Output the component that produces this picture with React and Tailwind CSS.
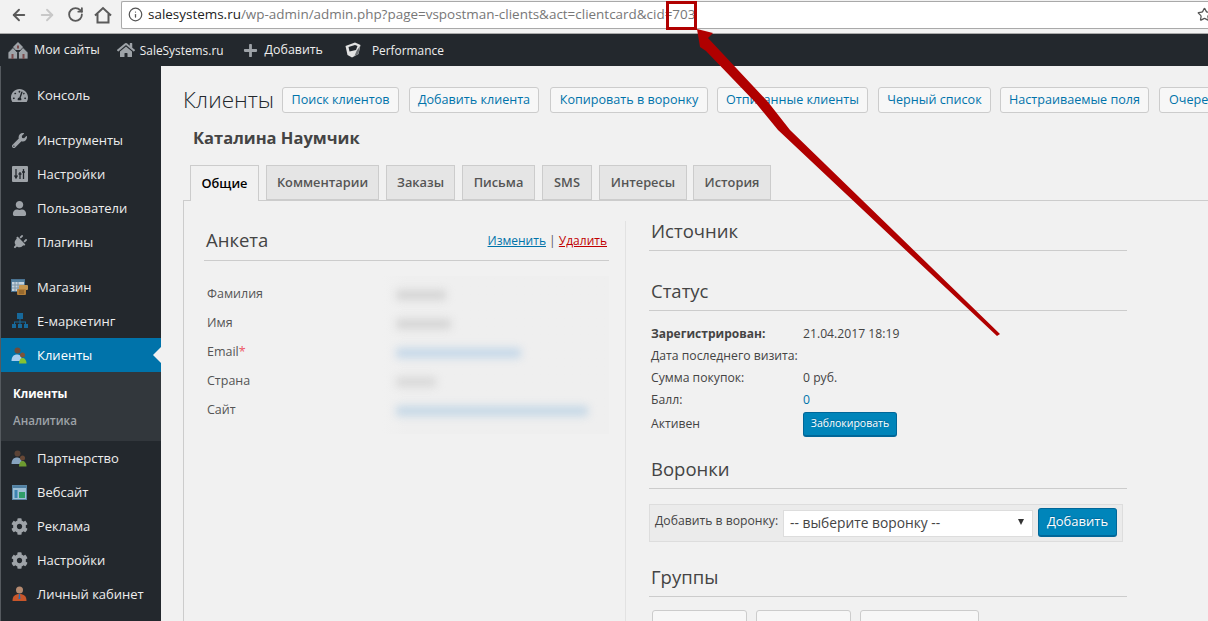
import { FaWrench, FaUser, FaPlug, FaCog, FaTachometerAlt, FaPlus, FaHome } from 'react-icons/fa';
import { ArrowLeft, ArrowRight, RotateCw, Info, Star } from 'lucide-react';

const grey = '#9ea3a8';

function SliderIcon() {
  return (
    <svg width="16" height="16" viewBox="0 0 16 16">
      <rect width="16" height="16" rx="1" fill={grey} />
      <path d="M4 3v8M2.500 9.500 4 12l1.500-2.500M8 13V6M11.500 3v10M10 6h3M6.500 8h3" stroke="#23282d" strokeWidth="1.300" fill="none" />
    </svg>
  );
}

function ShopIcon() {
  return (
    <svg width="17" height="16" viewBox="0 0 17 16">
      <rect x="0.500" y="0.500" width="13" height="12" fill="#c5d3de" stroke="#4a7392" />
      <rect x="1" y="1" width="12" height="2" fill="#55809f" />
      <path d="M4 3v9M7 3v9M1 6h12M1 9h12" stroke="#7d94a6" />
      <rect x="8" y="6" width="9" height="5" rx="1" fill="#c4954f" />
      <rect x="6" y="10" width="9" height="6" rx="1" fill="#b37f3a" />
      <path d="M8 12h5M8 14h5" stroke="#7d5520" />
    </svg>
  );
}

function TreeIcon() {
  return (
    <svg width="16" height="16" viewBox="0 0 16 16" fill="#17699b">
      <rect x="5" y="0" width="6" height="6" />
      <rect x="0" y="11" width="4" height="4" />
      <rect x="6" y="11" width="4" height="4" />
      <rect x="12" y="11" width="4" height="4" />
      <path d="M7.500 6h1v2.500H14V11h-1V9.500H8.500V11h-1V9.500H3V11H2V8.500h5.500z" />
    </svg>
  );
}

function PeopleIcon({ dim }) {
  return (
    <svg width="17" height="17" viewBox="0 0 17 17" opacity={dim ? 0.75 : 1}>
      <circle cx="6.500" cy="3.500" r="3" fill="#6e4c3a" />
      <path d="M0.500 14c0-4.500 2.500-6.500 5.500-6.500s5 2 5 6.500z" fill="#a9cdf0" />
      <circle cx="11.500" cy="8" r="2.500" fill="#7d5238" />
      <path d="M8 16.500c0-3.500 1.500-5.500 3.500-5.500s4 2 4 5.500z" fill="#86c232" />
    </svg>
  );
}

function SiteIcon() {
  return (
    <svg width="15" height="15" viewBox="0 0 15 15">
      <rect x="0.500" y="0.500" width="14" height="14" fill="#9fc0d6" stroke="#5b87a6" />
      <rect x="1" y="1" width="13" height="2" fill="#4f80a3" />
      <rect x="2.500" y="5" width="3" height="8" fill="#3d83b0" />
      <rect x="7" y="7" width="6" height="6" fill="#2f9e69" />
    </svg>
  );
}

function CabinetIcon() {
  return (
    <svg width="15" height="16" viewBox="0 0 15 16">
      <circle cx="7.500" cy="4" r="3.500" fill="#b58a70" />
      <path d="M0.500 15c0-5 2.500-7 7-7s7 2 7 7z" fill="#c9562a" />
      <path d="M7 8h1l.5 5h-2z" fill="#2f6fb0" />
    </svg>
  );
}

function NetworkIcon() {
  return (
    <svg width="20" height="17" viewBox="0 0 20 17">
      <path d="M10 0 15 5v3H5V5z" fill={grey} />
      <path d="M5 5.500 0 10.500V17h9.500v-6.500z" fill={grey} stroke="#23282d" strokeWidth="0.800" />
      <path d="M15 5.500 10.500 10.500V17H20v-6.500z" fill={grey} stroke="#23282d" strokeWidth="0.800" />
      <rect x="3.500" y="12" width="2" height="5" fill="#7a4b4b" />
      <rect x="14.500" y="12" width="2" height="5" fill="#7a4b4b" />
      <rect x="9" y="3.500" width="2" height="3" fill="#7a4b4b" />
    </svg>
  );
}

function BoxIcon() {
  return (
    <svg width="16" height="16" viewBox="0 0 16 16">
      <path d="M0.500 4 10 0.500l5.500 2.500-2 9L7 15.500 2.500 13z" fill="#e2e2e2" />
      <path d="M3.500 5 10 3l2.500 1-1.500 4-6.500 1.500z" fill="#23282d" />
      <path d="M11.500 9 15 4l-1.500 8L9.500 14z" fill="#6d7175" />
    </svg>
  );
}

function BrowserHome() {
  return (
    <svg width="18" height="18" viewBox="0 0 18 18" fill="none" stroke="#5a5a5a" strokeWidth="2">
      <path d="M1 9.500 9 2l8 7.500M3.500 8v8.500h11V8" />
    </svg>
  );
}

function MenuItem({ icon, label, active, className = '' }) {
  return (
    <div
      className={`relative flex h-[34px] items-center text-[13px] font-normal ${
        active ? 'bg-[#0073aa] text-white' : 'text-[#eeeeee]'
      } ${className}`}
    >
      <span className="flex w-[36px] shrink-0 items-center justify-center pl-[1px]">{icon}</span>
      <span className="pt-[1px]">{label}</span>
      {active && (
        <span className="absolute right-0 top-[9px] h-0 w-0 border-y-[8px] border-r-[8px] border-y-transparent border-r-[#f1f1f1]" />
      )}
    </div>
  );
}

function Sidebar() {
  const g = { color: grey };
  return (
    <aside className="h-full w-[161px] shrink-0 border-l border-l-[#555a5f] bg-[#23282d] pt-[12px]">
      <MenuItem icon={<FaTachometerAlt size={17} style={g} />} label="Консоль" />
      <div className="h-[11px]" />
      <MenuItem icon={<FaWrench size={15} style={g} />} label="Инструменты" />
      <MenuItem icon={<SliderIcon />} label="Настройки" />
      <MenuItem icon={<FaUser size={15} style={g} />} label="Пользователи" />
      <MenuItem icon={<FaPlug size={15} className="rotate-45" style={g} />} label="Плагины" />
      <div className="h-[11px]" />
      <MenuItem icon={<ShopIcon />} label="Магазин" />
      <MenuItem icon={<TreeIcon />} label="E-маркетинг" />
      <MenuItem icon={<PeopleIcon />} label="Клиенты" active />
      <div className="h-[69px] bg-[#32373c] pl-[12px] pt-[8px] text-[11.600px] leading-[27px]">
        <div className="font-bold text-white">Клиенты</div>
        <div className="font-semibold text-[#9ea3a8]">Аналитика</div>
      </div>
      <MenuItem icon={<PeopleIcon dim />} label="Партнерство" />
      <MenuItem icon={<SiteIcon />} label="Вебсайт" />
      <MenuItem icon={<FaCog size={17} style={g} />} label="Реклама" />
      <MenuItem icon={<FaCog size={17} style={g} />} label="Настройки" />
      <MenuItem icon={<CabinetIcon />} label="Личный кабинет" />
    </aside>
  );
}

function Toolbar() {
  return (
    <div className="flex h-[34px] items-center border-b border-b-[#a9a9a9] bg-[#f2f2f2] pb-[4px] pl-[10px]">
      <ArrowLeft size={18} strokeWidth={2.5} className="text-[#5a5a5a]" />
      <ArrowRight size={18} strokeWidth={2.5} className="ml-[10px] text-[#c8c8c8]" />
      <RotateCw size={17} strokeWidth={2.6} className="ml-[11px] text-[#5a5a5a]" />
      <span className="ml-[10px]"><BrowserHome /></span>
      <div className="ml-[9px] flex h-[28px] flex-1 items-center rounded-l-[2px] border border-r-0 border-[#a9a9a9] bg-white pl-[6px] text-[13.460px]">
        <Info size={15} strokeWidth={2} className="text-[#555555]" />
        <span className="ml-[5px] whitespace-nowrap text-[#222222]">salesystems.ru</span>
        <span className="whitespace-nowrap text-[#777777]">/wp-admin/admin.php?page=vspostman-clients&amp;act=clientcard&amp;cid=703</span>
        <Star size={15} className="ml-auto mr-[-4px] shrink-0 text-[#555555]" />
      </div>
    </div>
  );
}

function AdminBar() {
  return (
    <div className="flex h-[32px] items-center bg-[#23282d] pl-[8px] text-[12.400px] text-[#eeeeee]">
      <NetworkIcon />
      <span className="ml-[6px] pt-[1px]">Мои сайты</span>
      <FaHome size={18} className="ml-[17px]" style={{ color: grey }} />
      <span className="ml-[5px] pt-[1px] text-[11.900px]">SaleSystems.ru</span>
      <FaPlus size={15} className="ml-[19px]" style={{ color: grey }} />
      <span className="ml-[7px] pt-[1px]">Добавить</span>
      <span className="ml-[22px]"><BoxIcon /></span>
      <span className="ml-[11px] pt-[1px] text-[11.900px]">Performance</span>
    </div>
  );
}

function TopButton({ children, className = '' }) {
  return (
    <button className={`h-[26px] shrink-0 whitespace-nowrap rounded-[3px] border border-[#cccccc] bg-[#f7f7f7] pt-[1px] text-[12.600px] leading-none text-[#0073aa] ${className}`}>
      {children}
    </button>
  );
}

function Tab({ label, active, width }) {
  return (
    <div
      className={`flex h-[35px] items-center justify-center border border-[#cccccc] text-[12.800px] font-semibold ${
        active ? 'mb-[-1px] h-[36px] border-b-0 bg-[#f1f1f1] text-black' : 'bg-[#e5e5e5] text-[#555555]'
      } ${width}`}
    >
      {label}
    </div>
  );
}

function SectionTitle({ children, className = '' }) {
  return (
    <div className={`h-[30px] border-b border-b-[#cccccc] pl-[2px] text-[18.500px] leading-[20px] text-[#444444] ${className}`}>
      {children}
    </div>
  );
}

function ProfileRow({ label, star, blurClass }) {
  return (
    <div className="flex h-[29px] items-center text-[12.500px] text-[#555555]">
      <span className="w-[192px] shrink-0 pl-[3px]">
        {label}
        {star && <span className="text-[#ee5566]">*</span>}
      </span>
      <span className={`h-[10px] rounded-[3px] blur-[4px] ${blurClass}`} />
    </div>
  );
}

function StatusRow({ label, value, bold, link }) {
  return (
    <div className="flex h-[22px] items-center text-[12.200px] text-[#444444]">
      <span className={`w-[154px] shrink-0 whitespace-nowrap pl-[2px] ${bold ? 'text-[12px] font-bold' : ''}`}>{label}</span>
      <span className={link ? 'text-[#0073aa]' : ''}>{value}</span>
    </div>
  );
}

function BlueButton({ children, className = '' }) {
  return (
    <button className={`rounded-[3px] border border-[#006799] border-b-[2px] bg-[#0085ba] text-white [text-shadow:0_-1px_1px_#006799] ${className}`}>
      {children}
    </button>
  );
}

function Main() {
  return (
    <main className="min-w-0 flex-1 overflow-hidden bg-[#f1f1f1] pl-[22px] pt-[21px]">
      <div className="flex h-[26px] items-center">
        <h1 className="w-[99px] shrink-0 text-[22.500px] leading-none text-[#23282d] [font-weight:300]">Клиенты</h1>
        <TopButton className="w-[117px]">Поиск клиентов</TopButton>
        <TopButton className="ml-[10px] w-[130px]">Добавить клиента</TopButton>
        <TopButton className="ml-[11px] w-[158px]">Копировать в воронку</TopButton>
        <TopButton className="ml-[9px] w-[151px]">Отписанные клиенты</TopButton>
        <TopButton className="ml-[10px] w-[113px]">Черный список</TopButton>
        <TopButton className="ml-[9px] w-[149px]">Настраиваемые поля</TopButton>
        <TopButton className="ml-[10px] w-[100px] pl-[9px] text-left">Очередь</TopButton>
      </div>
      <div className="mt-[13px] pl-[10px] text-[16.500px] font-bold leading-[24px] text-[#444444]">Каталина Наумчик</div>
      <div className="mt-[15px] flex gap-[7px] pl-[7px]">
        <Tab label="Общие" active width="w-[69px]" />
        <Tab label="Комментарии" width="w-[113px]" />
        <Tab label="Заказы" width="w-[69px]" />
        <Tab label="Письма" width="w-[73px]" />
        <Tab label="SMS" width="w-[50px]" />
        <Tab label="Интересы" width="w-[88px]" />
        <Tab label="История" width="ml-[-1px] w-[78px]" />
      </div>
      <div className="flex border-l border-t border-[#cccccc] pl-[20px] pt-[20px]">
        <section className="w-[405px] shrink-0 pt-[7px]">
          <div className="flex h-[33px] items-start justify-between border-b border-b-[#cccccc] pl-[2px] pr-[2px]">
            <span className="text-[18.500px] leading-[24px] text-[#444444]">Анкета</span>
            <span className="pt-[4px] text-[12px] text-[#555555]">
              <span className="text-[#0073aa] underline">Изменить</span> | <span className="text-[#c00000] underline">Удалить</span>
            </span>
          </div>
          <div className="mt-[15px] h-[158px] bg-gradient-to-r from-[#f1f1f1] from-[44%] to-[#efefef] to-[50%] pt-[4px]">
            <ProfileRow label="Фамилия" blurClass="w-[50px] bg-[#d4d4d4]" />
            <ProfileRow label="Имя" blurClass="w-[55px] bg-[#d4d4d4]" />
            <ProfileRow label="Email" star blurClass="w-[125px] bg-[#c4d7e8]" />
            <ProfileRow label="Страна" blurClass="w-[40px] bg-[#d8d8d8]" />
            <ProfileRow label="Сайт" blurClass="w-[192px] bg-[#c4d7e6]" />
          </div>
        </section>
        <div className="ml-[16px] h-[400px] w-px shrink-0 bg-[#e2e2e2]" />
        <section className="ml-[23px] w-[478px] shrink-0">
          <SectionTitle>Источник</SectionTitle>
          <SectionTitle className="mt-[30px]">Статус</SectionTitle>
          <div className="pt-[12px]">
            <StatusRow label="Зарегистрирован:" value="21.04.2017 18:19" bold />
            <StatusRow label="Дата последнего визита:" value="" />
            <StatusRow label="Сумма покупок:" value="0 руб." />
            <StatusRow label="Балл:" value="0" link />
            <div className="mt-[1px] flex h-[25px] items-center text-[12.200px] text-[#444444]">
              <span className="w-[154px] shrink-0 pl-[2px]">Активен</span>
              <BlueButton className="h-[25px] w-[94px] text-[10.500px]">Заблокировать</BlueButton>
            </div>
          </div>
          <SectionTitle className="mt-[22px]">Воронки</SectionTitle>
          <div className="mt-[15px] flex h-[38px] w-[474px] items-center border border-[#dddddd] bg-[#ebebeb] pl-[5px] text-[12.200px] text-[#444444]">
            <span className="w-[128px] shrink-0 whitespace-nowrap pb-[3px]">Добавить в воронку:</span>
            <div className="relative flex h-[27px] w-[250px] items-center border border-[#dddddd] bg-white pl-[6px] text-[13.800px]">
              -- выберите воронку --
              <span className="absolute right-[8px] top-[8px] h-0 w-0 border-x-[3.500px] border-t-[6px] border-x-transparent border-t-[#333333]" />
            </div>
            <BlueButton className="mb-[1px] ml-[5px] h-[29px] w-[79px] text-[13px]">Добавить</BlueButton>
          </div>
          <SectionTitle className="mt-[25px]">Группы</SectionTitle>
          <div className="mt-[13px] flex gap-[9px] pl-[3px]">
            <div className="h-[30px] w-[95px] rounded-t-[3px] border border-[#cccccc] bg-[#f7f7f7]" />
            <div className="h-[30px] w-[95px] rounded-t-[3px] border border-[#cccccc] bg-[#f7f7f7]" />
            <div className="h-[30px] w-[119px] rounded-t-[3px] border border-[#cccccc] bg-[#f7f7f7]" />
          </div>
        </section>
      </div>
    </main>
  );
}

export default function App() {
  return (
    <div className="relative h-[621px] w-[1208px] overflow-hidden bg-[#f1f1f1] font-['Open_Sans',sans-serif]">
      <Toolbar />
      <AdminBar />
      <div className="flex h-[555px]">
        <Sidebar />
        <Main />
      </div>
      {/* annotation drawn over the screenshot */}
      <div className="absolute left-[666px] top-px h-[29px] w-[31px] border-[3px] border-[#b00000]" />
      <svg className="pointer-events-none absolute inset-0" width="1208" height="621" viewBox="0 0 1208 621">
        <polygon points="697,29 713,33 708,38 768,102 790,130 1000,334 997,336 778,130 755,102 706,51 700,47" fill="#b00000" />
      </svg>
    </div>
  );
}
